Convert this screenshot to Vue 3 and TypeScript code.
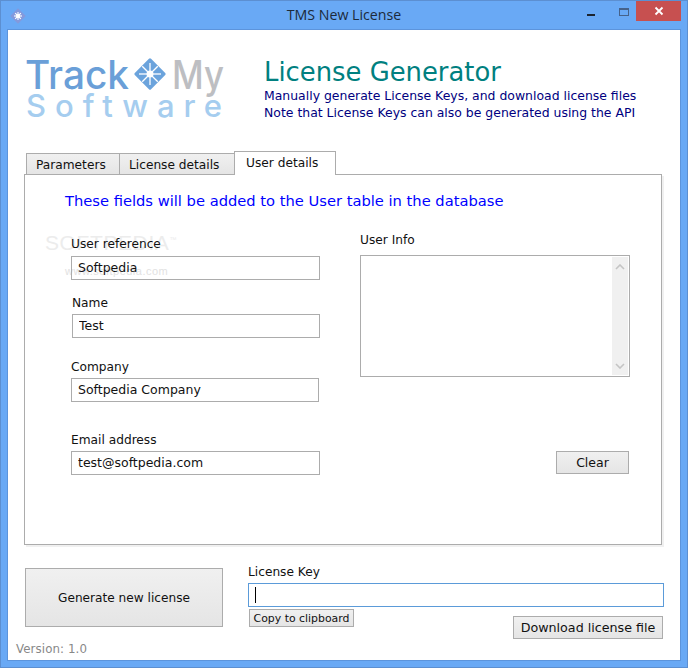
<script setup lang="ts">
interface Field { label: string; value: string; cls: string }
const fields: Field[] = [
  { label: 'User reference', value: 'Softpedia', cls: 'f-ref' },
  { label: 'Name', value: 'Test', cls: 'f-name' },
  { label: 'Company', value: 'Softpedia Company', cls: 'f-company' },
  { label: 'Email address', value: 'test@softpedia.com', cls: 'f-email' },
]
const rays = Array.from({ length: 8 }, (_, i) => i * 45)
</script>

<template>
  <div class="window">
    <div class="titlebar">
      <div class="tb-left">
        <svg class="app-icon" width="16" height="16" viewBox="0 0 16 16">
          <rect x="2.5" y="2.5" width="11" height="11" transform="rotate(45 8 8)" fill="#8499dc" />
          <g stroke="#fff" stroke-width="1.1">
            <line v-for="r in rays" :key="r" x1="8" y1="8" x2="8" y2="4" :transform="`rotate(${r} 8 8)`" />
          </g>
          <circle cx="8" cy="8" r="2" fill="#fff" />
        </svg>
      </div>
      <div class="title">TMS New License</div>
      <div class="controls">
        <span class="min"></span>
        <span class="max"></span>
        <span class="close">
          <svg width="10" height="10" viewBox="0 0 10 10"><path d="M1.5 1.5l7 7M8.5 1.5l-7 7" stroke="#fff" stroke-width="1.8" /></svg>
        </span>
      </div>
    </div>

    <div class="client">
      <header class="header">
        <svg class="logo" width="200" height="66" viewBox="0 0 200 66">
          <text x="0" y="30" class="lg-track" textLength="104" lengthAdjust="spacingAndGlyphs">Track</text>
          <g transform="translate(125 15)">
            <rect x="-11.5" y="-11.5" width="23" height="23" rx="1.5" transform="rotate(45)" fill="#6ba3dc" />
            <g stroke="#fff" stroke-width="1.3">
              <line v-for="r in rays" :key="r" x1="0" y1="0" x2="0" y2="-11" :transform="`rotate(${r})`" />
            </g>
            <circle r="3.5" fill="#fff" />
          </g>
          <text x="147" y="30" class="lg-my" textLength="52" lengthAdjust="spacingAndGlyphs">My</text>
          <text x="1" y="58" class="lg-soft" textLength="196" lengthAdjust="spacing">Software</text>
        </svg>
        <div class="head-text">
          <h1>License Generator</h1>
          <p class="sub1">Manually generate License Keys, and download license files</p>
          <p>Note that License Keys can also be generated using the API</p>
        </div>
      </header>

      <nav class="tabs">
        <div class="tab t1">Parameters</div>
        <div class="tab t2">License details</div>
        <div class="tab active">User details</div>
      </nav>

      <section class="panel">
        <h2>These fields will be added to the User table in the database</h2>
        <div class="watermark">
          <span class="wm-big">SOFTPEDIA<sup>™</sup></span>
          <span class="wm-small">www.softpedia.com</span>
        </div>
        <div class="columns">
          <div class="left">
            <div v-for="f in fields" :key="f.label" class="field" :class="f.cls">
              <label>{{ f.label }}</label>
              <input type="text" :value="f.value" readonly />
            </div>
          </div>
          <div class="right">
            <label>User Info</label>
            <div class="memo">
              <div class="scroll">
                <svg width="10" height="6" viewBox="0 0 10 6"><path d="M1 5l4-4 4 4" fill="none" stroke="#c4c4c4" stroke-width="1.6" /></svg>
                <svg width="10" height="6" viewBox="0 0 10 6"><path d="M1 1l4 4 4-4" fill="none" stroke="#c4c4c4" stroke-width="1.6" /></svg>
              </div>
            </div>
            <button class="btn clear">Clear</button>
          </div>
        </div>
      </section>

      <div class="bottom">
        <button class="btn generate">Generate new license</button>
        <div class="key-col">
          <label>License Key</label>
          <div class="key-input"><span class="caret"></span></div>
          <div class="key-actions">
            <button class="btn copy">Copy to clipboard</button>
            <button class="btn download">Download license file</button>
          </div>
        </div>
      </div>
      <div class="version">Version: 1.0</div>
    </div>
  </div>
</template>

<style>
html, body { margin: 0; padding: 0; background: #fff; }
</style>

<style scoped>
* { box-sizing: border-box; }
.window {
  width: 688px; height: 668px; background: #69a9f5; border: 1px solid #5c8fd1;
  display: flex; flex-direction: column; overflow: hidden;
  font-family: "DejaVu Sans", sans-serif; font-size: 12.2px; color: #111;
}
.titlebar {
  height: 29px; flex: none; display: grid; grid-template-columns: 1fr auto 1fr; align-items: start;
}
.tb-left { padding: 7px 0 0 9px; }
.app-icon { display: block; }
.title {
  font-family: "Open Sans", sans-serif; font-size: 14.2px; color: #1c2a3a; padding-top: 4px; line-height: 20px;
}
.controls { display: flex; justify-content: flex-end; align-items: flex-start; padding-right: 6px; }
.min { width: 8px; height: 2px; background: #1b2430; margin: 13px 24px 0 0; }
.max { width: 10px; height: 8px; border: 1px solid #46628a; border-top-width: 2px; margin: 7px 7px 0 0; }
.close { width: 45px; height: 20px; background: #c75050; display: flex; align-items: center; justify-content: center; }
.client {
  margin: 0 7px 7px; width: 672px; flex: 1; background: #fff; padding: 0 0 0 16px;
  box-shadow: 0 0 0 1px #5c94dc;
}
.header { height: 121px; display: flex; position: relative; }
.logo { margin: 29px 0 0 1px; flex: none; display: block; overflow: visible; }
.lg-track { font: 500 39px Inter, sans-serif; fill: #6a9fd8; }
.lg-my { font: 500 39px Inter, sans-serif; fill: #bdbec2; }
.lg-soft { font: 500 31px Inter, sans-serif; fill: #a5cdef; }
.head-text { margin-left: 39px; padding-top: 27px; color: #000080; font-size: 12.45px; }
h1 { margin: 0; font-size: 25.85px; font-weight: 400; line-height: 30px; color: #008080; }
.head-text p { margin: 0; line-height: 17px; }
.tabs { height: 24px; display: flex; align-items: flex-end; margin-left: 2px; position: relative; z-index: 1; }
.tab {
  height: 22px; border: 1px solid #acacac; line-height: 21px; padding: 1px 0 0 9px;
  background: linear-gradient(#f0f0f0, #e5e5e5); margin-right: -1px;
}
.t1 { width: 94px; }
.t2 { width: 116px; }
.tab.active { width: 102px; height: 24px; background: #fff; border-bottom: 0; line-height: 21px; margin-right: 0; padding-left: 11px; }
.panel {
  width: 638px; height: 371px; margin-top: -1px; border: 1px solid #acacac; box-shadow: 2px 2px 0 #f0f0f0;
  padding: 15px 0 0 40px; position: relative;
}
h2 { margin: 0; font-size: 14.7px; font-weight: 400; line-height: 22px; color: #0000ff; }
.watermark {
  position: absolute; left: 20px; top: 56px; color: #ececec; display: flex; flex-direction: column; line-height: 1;
}
.wm-big { font: 400 21px "Liberation Sans", sans-serif; letter-spacing: 0.6px; }
.wm-big sup { font-size: 7px; }
.wm-small { font: 11px "Liberation Sans", sans-serif; margin: 10px 0 0 20px; letter-spacing: 0.5px; color: #e2e2e2; }
.columns { display: flex; padding-left: 6px; position: relative; }
.left { width: 289px; }
.field label { display: block; line-height: 16px; }
.field input, .right .memo {
  display: block; border: 1px solid #acacac; background: transparent; outline: none;
}
.field input {
  font: inherit; font-size: 12.5px; color: inherit; height: 24px; width: 249px; padding: 0 6px 2px; margin-top: 4px;
}
.f-ref { margin-top: 24px; }
.f-name { margin-top: 15px; padding-left: 1px; }
.f-name input { width: 248px; margin-top: 3px; }
.f-company { margin-top: 21px; }
.f-company input { width: 248px; margin-top: 3px; }
.f-email { margin-top: 30px; }
.f-email input { margin-top: 3px; }
.right { width: 270px; display: flex; flex-direction: column; padding-top: 20px; }
.right label { line-height: 16px; }
.right .memo { height: 122px; margin-top: 7px; padding: 1px; display: flex; justify-content: flex-end; }
.scroll {
  width: 16px; background: #f0f0f0; display: flex; flex-direction: column; justify-content: space-between; align-items: center;
  padding: 7px 0 6px;
}
.scroll svg { display: block; }
.btn {
  font: inherit; color: inherit; border: 1px solid #acacac; background: linear-gradient(#f0f0f0, #e5e5e5); padding: 0; display: block;
}
.clear { width: 73px; height: 23px; margin: 74px 0 0 196px; font-size: 12.5px; }
.bottom { display: flex; height: 76px; margin-top: 18px; }
.generate { width: 198px; height: 59px; margin: 5px 0 0 1px; font-size: 12.15px; }
.key-col { margin-left: 25px; width: 416px; padding-top: 1px; }
.key-col label { display: block; line-height: 16px; }
.key-input { height: 24px; border: 1px solid #5b9bd9; margin-top: 3px; padding: 3px 0 0 6px; }
.caret { display: block; width: 1px; height: 16px; background: #000; }
.key-actions { display: flex; justify-content: space-between; align-items: flex-start; margin-top: 2px; }
.copy { width: 105px; height: 18px; margin-left: 1px; font-size: 10.9px; line-height: 16px; padding-top: 1px; }
.download { width: 150px; height: 23px; margin: 7px 1px 0 0; font-size: 12.7px; }
.version { margin: 3px 0 0 -8px; color: #888; line-height: 14px; font-size: 11.8px; letter-spacing: 0.1px; }
</style>
